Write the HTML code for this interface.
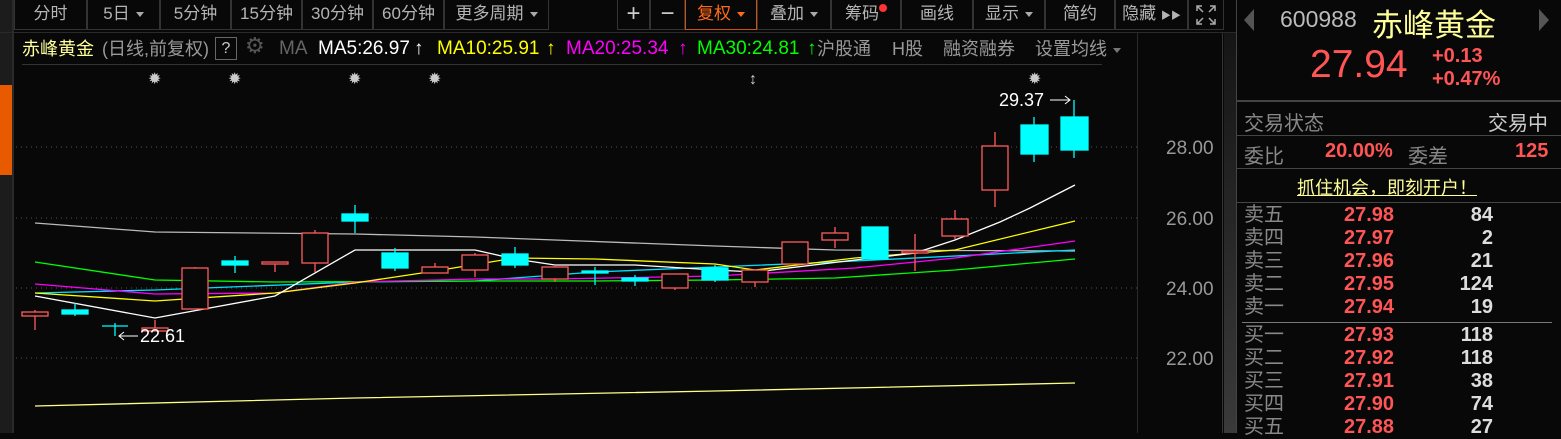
<!DOCTYPE html>
<html><head><meta charset="utf-8"><style>
*{margin:0;padding:0;box-sizing:border-box}
body{width:1561px;height:433px;background:#080808;overflow:hidden;position:relative;font-family:"Liberation Sans","Noto Sans CJK SC",sans-serif;color:#aaa}
.a{position:absolute;white-space:nowrap}
.tb{position:absolute;top:0;height:30px;border:1px solid #333;border-top:none;font-size:17px;color:#b4b4b4;text-align:center;line-height:28px}
.tri{display:inline-block;width:0;height:0;border-left:4px solid transparent;border-right:4px solid transparent;border-top:5px solid #aaa;vertical-align:middle;margin-left:6px}
.h{position:absolute;top:38px;font-size:18px;white-space:nowrap;line-height:22px}
.r{color:#ff5555;font-weight:bold}
.g{color:#888}
.w{color:#ddd;font-weight:bold}
.ax{position:absolute;left:1166px;font-size:19px;color:#999}
.ob{position:absolute;left:1244px;font-size:20px;line-height:23px}
.ob span{display:inline-block}
.ob .g{width:100px;font-size:20px}
.ob .r{width:60px}
.ob .w{width:89px;text-align:right}
</style></head><body>
<!-- left strip -->
<div class="a" style="left:0;top:0;width:12px;height:433px;background:#1c1c1c"></div>
<div class="a" style="left:0;top:85px;width:12px;height:90px;background:#e85a00"></div>
<div class="a" style="left:12px;top:0;width:2px;height:433px;background:#2a2a2a"></div>
<!-- toolbar -->
<div class="tb" style="left:14px;width:73px">分时</div>
<div class="tb" style="left:87px;width:73px">5日<span class="tri"></span></div>
<div class="tb" style="left:160px;width:71px">5分钟</div>
<div class="tb" style="left:231px;width:71px">15分钟</div>
<div class="tb" style="left:302px;width:71px">30分钟</div>
<div class="tb" style="left:373px;width:71px">60分钟</div>
<div class="tb" style="left:444px;width:105px">更多周期<span class="tri"></span></div>
<div class="tb" style="left:617px;width:33px;font-size:24px;color:#ccc">+</div>
<div class="tb" style="left:650px;width:35px;font-size:24px;color:#ccc">−</div>
<div class="tb" style="left:685px;width:72px;color:#ff6a1a;border-color:#d05010">复权<span class="tri" style="border-top-color:#ff6a1a"></span></div>
<div class="tb" style="left:757px;width:74px">叠加<span class="tri"></span></div>
<div class="tb" style="left:831px;width:70px">筹码<span style="display:inline-block;width:8px;height:8px;border-radius:50%;background:#f33;vertical-align:top;margin-top:4px"></span></div>
<div class="tb" style="left:901px;width:72px">画线</div>
<div class="tb" style="left:973px;width:72px">显示<span class="tri"></span></div>
<div class="tb" style="left:1045px;width:70px">简约</div>
<div class="tb" style="left:1115px;width:73px">隐藏 <span style="font-size:10px">▶▶</span></div>
<div class="tb" style="left:1188px;width:36px"><svg width="22" height="22" viewBox="0 0 22 22" style="margin-top:4px" fill="none" stroke="#aaa" stroke-width="1.5"><path d="M2 7V2H7M2 2L8 8M15 2H20V7M20 2L14 8M2 15V20H7M2 20L8 14M20 15V20H15M20 20L14 14"/></svg></div>
<!-- header row -->
<div class="h" style="left:22px;color:#ffff99">赤峰黄金</div>
<div class="h" style="left:102px;color:#999">(日线,前复权)</div>
<div class="h" style="left:215px;top:37px;width:22px;height:23px;border:1px solid #666;color:#ccc;text-align:center;font-size:16px">?</div>
<div class="h" style="left:245px;color:#555;font-size:22px;top:35px">⚙</div>
<div class="h" style="left:279px;color:#666;font-size:19px">MA</div>
<div class="h" style="left:318px;color:#fff;font-size:19px">MA5:26.97</div>
<div class="h" style="left:414px;color:#fff;font-size:19px">↑</div>
<div class="h" style="left:437px;color:#ff0;font-size:19px">MA10:25.91</div>
<div class="h" style="left:546px;color:#ff0;font-size:19px">↑</div>
<div class="h" style="left:566px;color:#f0f;font-size:19px">MA20:25.34</div>
<div class="h" style="left:678px;color:#f0f;font-size:19px">↑</div>
<div class="h" style="left:697px;color:#0f0;font-size:19px">MA30:24.81</div>
<div class="h" style="left:807px;color:#0f0;font-size:19px">↑</div>
<div class="h" style="left:817px;color:#999">沪股通</div>
<div class="h" style="left:892px;color:#999">H股</div>
<div class="h" style="left:943px;color:#999">融资融券</div>
<div class="h" style="left:1035px;color:#999">设置均线<span class="tri" style="border-top-color:#777"></span></div>
<div class="a" style="left:22px;top:64px;width:1080px;height:1px;background:#333"></div>
<div class="a" style="left:1137px;top:32px;width:1px;height:401px;background:#2a2a2a"></div>
<div class="a" style="left:1222px;top:32px;width:1px;height:401px;background:#333"></div>
<div class="a" style="left:1224px;top:32px;width:12px;height:401px;background:linear-gradient(#151515,#3a3a3a)"></div>
<div class="a" style="left:0;top:32px;width:1236px;height:1px;background:#2a2a2a"></div>
<!-- axis labels -->
<div class="ax" style="top:138px">28.00</div>
<div class="ax" style="top:209px">26.00</div>
<div class="ax" style="top:279px">24.00</div>
<div class="ax" style="top:349px">22.00</div>
<svg class="a" style="left:0;top:0" width="1236" height="433">
<g stroke="#555" stroke-dasharray="1 4"><line x1="16" y1="147" x2="1140" y2="147"/><line x1="16" y1="218" x2="1140" y2="218"/><line x1="16" y1="288" x2="1140" y2="288"/><line x1="16" y1="358" x2="1140" y2="358"/></g>
<g fill="#ccc" font-size="16"><text x="148" y="84">✹</text><text x="228" y="84">✹</text><text x="348" y="84">✹</text><text x="428" y="84">✹</text><text x="1028" y="84">✹</text><text x="749" y="84">↕</text></g>
<g fill="none" stroke-width="1.3">
<polyline stroke="#bbb" points="35,223 155,232 355,234 475,237 555,240 715,246 835,250 1075,251"/>
<polyline stroke="#00e0ff" points="35,293 155,290 355,282 475,281 595,272 715,267 835,262 1075,250"/>
<polyline stroke="#0f0" points="35,262 155,280 275,282 475,281 595,281 715,280 835,278 955,270 1075,259"/>
<polyline stroke="#f0f" points="35,284 155,294 275,293 355,282 475,279 555,279 715,276 855,268 955,258 1075,241"/>
<polyline stroke="#ff0" points="35,293 155,301 275,293 355,283 435,271 515,258 595,259 715,264 755,270 855,258 955,250 1075,221"/>
<polyline stroke="#fff" points="35,296 155,318 275,296 355,250 475,250 515,259 555,265 635,265 715,270 755,272 855,260 915,253 955,240 1000,222 1030,208 1075,185"/>
<polyline stroke="#ffff88" points="35,406 355,398 715,391 1075,383"/>
</g>
<g stroke="#ff5b5b" fill="none" stroke-width="1.3">
<line x1="35" y1="310" x2="35" y2="330"/><rect x="22" y="312" width="26" height="4" fill="#080808"/>
<line x1="155" y1="320" x2="155" y2="331"/><rect x="142" y="328" width="26" height="3" fill="#080808"/>
<line x1="195" y1="267" x2="195" y2="309"/><rect x="182" y="268" width="26" height="41" fill="#080808"/>
<line x1="275" y1="262" x2="275" y2="272"/><rect x="262" y="262" width="26" height="2" fill="#080808"/>
<line x1="315" y1="230" x2="315" y2="272"/><rect x="302" y="233" width="26" height="30" fill="#080808"/>
<line x1="435" y1="263" x2="435" y2="273"/><rect x="422" y="267" width="26" height="6" fill="#080808"/>
<line x1="475" y1="253" x2="475" y2="277"/><rect x="462" y="255" width="26" height="15" fill="#080808"/>
<line x1="555" y1="265" x2="555" y2="282"/><rect x="542" y="267" width="26" height="12" fill="#080808"/>
<line x1="675" y1="274" x2="675" y2="290"/><rect x="662" y="274" width="26" height="14" fill="#080808"/>
<line x1="755" y1="270" x2="755" y2="287"/><rect x="742" y="270" width="26" height="12" fill="#080808"/>
<line x1="795" y1="242" x2="795" y2="264"/><rect x="782" y="242" width="26" height="22" fill="#080808"/>
<line x1="835" y1="227" x2="835" y2="248"/><rect x="822" y="233" width="26" height="7" fill="#080808"/>
<line x1="915" y1="234" x2="915" y2="271"/><rect x="902" y="251" width="26" height="2" fill="#080808"/>
<line x1="955" y1="210" x2="955" y2="239"/><rect x="942" y="219" width="26" height="17" fill="#080808"/>
<line x1="995" y1="132" x2="995" y2="207"/><rect x="982" y="146" width="26" height="44" fill="#080808"/>
</g>
<g stroke="#0ff" fill="#0ff" stroke-width="1.3">
<line x1="75" y1="303" x2="75" y2="316"/><rect x="62" y="310" width="26" height="4"/>
<line x1="115" y1="323" x2="115" y2="336"/><line x1="102" y1="326" x2="128" y2="326"/>
<line x1="235" y1="256" x2="235" y2="273"/><rect x="222" y="261" width="26" height="4"/>
<line x1="355" y1="205" x2="355" y2="233"/><rect x="342" y="214" width="26" height="7"/>
<line x1="395" y1="248" x2="395" y2="271"/><rect x="382" y="253" width="26" height="15"/>
<line x1="515" y1="247" x2="515" y2="268"/><rect x="502" y="254" width="26" height="11"/>
<line x1="595" y1="267" x2="595" y2="285"/><rect x="582" y="271" width="26" height="2"/>
<line x1="635" y1="275" x2="635" y2="286"/><rect x="622" y="278" width="26" height="3"/>
<line x1="715" y1="265" x2="715" y2="282"/><rect x="702" y="268" width="26" height="12"/>
<line x1="875" y1="227" x2="875" y2="259"/><rect x="862" y="227" width="26" height="32"/>
<line x1="1034" y1="117" x2="1034" y2="162"/><rect x="1021" y="125" width="27" height="29"/>
<line x1="1074" y1="100" x2="1074" y2="158"/><rect x="1061" y="117" width="27" height="33"/>
</g>
<g fill="#fff" font-size="18"><text x="140" y="342">22.61</text><text x="999" y="106">29.37</text></g>
<g stroke="#fff" fill="none"><path d="M119 336H138M124 332L119 336L124 340"/><path d="M1050 100H1070M1065 96L1070 100L1065 104"/></g>
</svg>
<!-- right panel -->
<div class="a" style="left:1236px;top:0;width:1px;height:433px;background:#444"></div>
<div class="a" style="left:1244px;top:9px;width:0;height:0;border-top:11px solid transparent;border-bottom:11px solid transparent;border-right:10px solid #555"></div>
<div class="a" style="left:1539px;top:9px;width:0;height:0;border-top:11px solid transparent;border-bottom:11px solid transparent;border-left:10px solid #555"></div>
<div class="a" style="left:1280px;top:6px;font-size:23px;color:#bbb">600988</div>
<div class="a" style="left:1372px;top:0px;font-size:31px;color:#ffff99">赤峰黄金</div>
<div class="a" style="left:1310px;top:43px;font-size:39px;color:#ff5555">27.94</div>
<div class="a" style="left:1432px;top:45px;font-size:20px" ><span class="r">+0.13</span></div>
<div class="a" style="left:1432px;top:68px;font-size:20px"><span class="r">+0.47%</span></div>
<div class="a" style="left:1236px;top:100px;width:325px;height:2px;background:#444"></div>
<div class="a g" style="left:1244px;top:107px;font-size:20px">交易状态</div>
<div class="a" style="left:1488px;top:107px;font-size:20px;color:#ccc">交易中</div>
<div class="a" style="left:1236px;top:135px;width:325px;height:1px;background:#444"></div>
<div class="a g" style="left:1244px;top:140px;font-size:20px">委比</div>
<div class="a r" style="left:1325px;top:140px;font-size:20px">20.00%</div>
<div class="a g" style="left:1408px;top:140px;font-size:20px">委差</div>
<div class="a r" style="left:1515px;top:140px;font-size:20px">125</div>
<div class="a" style="left:1236px;top:168px;width:325px;height:1px;background:#444"></div>
<div class="a" style="left:1297px;top:174px;font-size:18px;color:#ffff99;text-decoration:underline">抓住机会，即刻开户！</div>
<div class="a" style="left:1236px;top:202px;width:325px;height:1px;background:#444"></div>
<div class="ob" style="top:204px">
<div><span class="g">卖五</span><span class="r">27.98</span><span class="w">84</span></div>
<div><span class="g">卖四</span><span class="r">27.97</span><span class="w">2</span></div>
<div><span class="g">卖三</span><span class="r">27.96</span><span class="w">21</span></div>
<div><span class="g">卖二</span><span class="r">27.95</span><span class="w">124</span></div>
<div><span class="g">卖一</span><span class="r">27.94</span><span class="w">19</span></div>
</div>
<div class="a" style="left:1242px;top:322px;width:310px;height:1px;background:#777"></div>
<div class="ob" style="top:324px">
<div><span class="g">买一</span><span class="r">27.93</span><span class="w">118</span></div>
<div><span class="g">买二</span><span class="r">27.92</span><span class="w">118</span></div>
<div><span class="g">买三</span><span class="r">27.91</span><span class="w">38</span></div>
<div><span class="g">买四</span><span class="r">27.90</span><span class="w">74</span></div>
<div><span class="g">买五</span><span class="r">27.88</span><span class="w">27</span></div>
</div>
</body></html>
